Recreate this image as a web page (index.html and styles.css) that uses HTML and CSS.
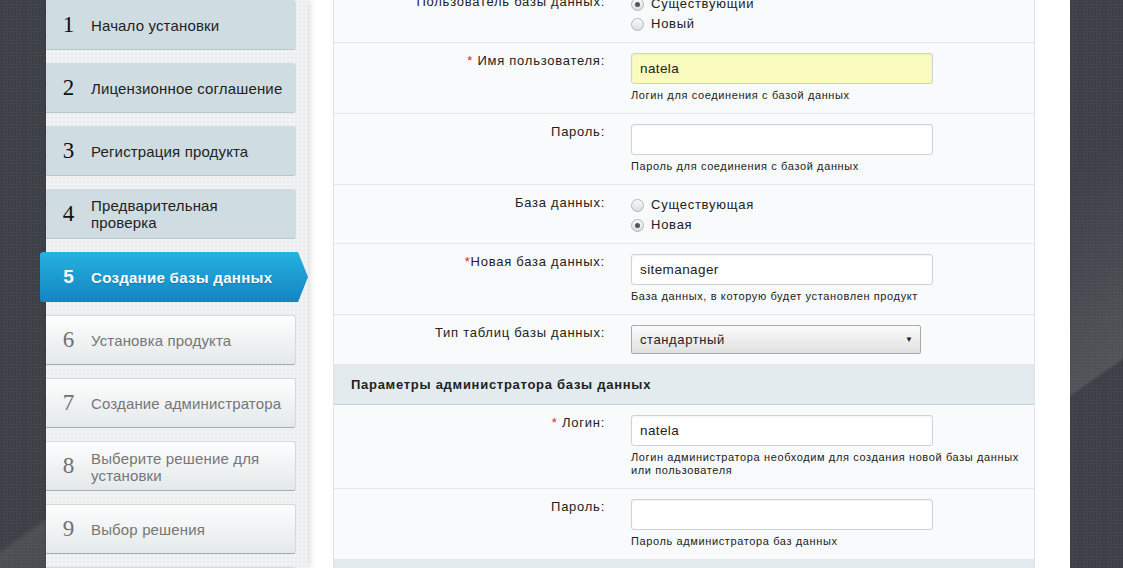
FILE: index.html
```html
<!DOCTYPE html>
<html lang="ru">
<head>
<meta charset="utf-8">
<title>Создание базы данных</title>
<link rel="stylesheet" href="styles.css">
</head>
<body>
<div class="page">
  <aside class="sidebar">
    <ol class="steps">
      <li class="step done"><span class="num">1</span><span class="label">Начало установки</span></li>
      <li class="step done"><span class="num">2</span><span class="label">Лицензионное соглашение</span></li>
      <li class="step done"><span class="num">3</span><span class="label">Регистрация продукта</span></li>
      <li class="step done"><span class="num">4</span><span class="label">Предварительная<br>проверка</span></li>
      <li class="step active"><span class="num">5</span><span class="label">Создание базы данных</span></li>
      <li class="step todo"><span class="num">6</span><span class="label">Установка продукта</span></li>
      <li class="step todo"><span class="num">7</span><span class="label">Создание администратора</span></li>
      <li class="step todo"><span class="num">8</span><span class="label">Выберите решение для<br>установки</span></li>
      <li class="step todo"><span class="num">9</span><span class="label">Выбор решения</span></li>
      <li class="step todo"></li>
    </ol>
  </aside>
  <main class="content">
    <div class="panel">
      <div class="row row-radio">
        <div class="lbl">Пользователь базы данных:</div>
        <div class="radios">
          <div class="opt"><span class="radio checked"></span>Существующий</div>
          <div class="opt"><span class="radio"></span>Новый</div>
        </div>
      </div>
      <div class="row">
        <div class="lbl"><span class="req">*</span> Имя пользователя:</div>
        <div class="ctl">
          <div class="field filled">natela</div>
          <div class="hint">Логин для соединения с базой данных</div>
        </div>
      </div>
      <div class="row">
        <div class="lbl">Пароль:</div>
        <div class="ctl">
          <div class="field"></div>
          <div class="hint">Пароль для соединения с базой данных</div>
        </div>
      </div>
      <div class="row row-radio">
        <div class="lbl">База данных:</div>
        <div class="radios">
          <div class="opt"><span class="radio"></span>Существующая</div>
          <div class="opt"><span class="radio checked"></span>Новая</div>
        </div>
      </div>
      <div class="row">
        <div class="lbl"><span class="req">*</span>Новая база данных:</div>
        <div class="ctl">
          <div class="field">sitemanager</div>
          <div class="hint">База данных, в которую будет установлен продукт</div>
        </div>
      </div>
      <div class="row row-select">
        <div class="lbl">Тип таблиц базы данных:</div>
        <div class="ctl">
          <div class="select"><span>стандартный</span><span class="caret">▼</span></div>
        </div>
      </div>
      <div class="section">Параметры администратора базы данных</div>
      <div class="row">
        <div class="lbl"><span class="req">*</span> Логин:</div>
        <div class="ctl">
          <div class="field">natela</div>
          <div class="hint">Логин администратора необходим для создания новой базы данных<br>или пользователя</div>
        </div>
      </div>
      <div class="row">
        <div class="lbl">Пароль:</div>
        <div class="ctl">
          <div class="field"></div>
          <div class="hint">Пароль администратора баз данных</div>
        </div>
      </div>
      <div class="section"></div>
    </div>
  </main>
</div>
</body>
</html>
```

FILE: styles.css
```css
html, body {
  margin: 0;
  height: 568px;
  overflow: hidden;
}

body {
  font-family: "Liberation Sans", Arial, sans-serif;
  color: #222;
  background-color: #3c3f45;
  background-image:
    radial-gradient(rgba(255, 255, 255, 0.06) 0.7px, transparent 1.1px),
    linear-gradient(145deg, transparent 0%, transparent 40.5%, rgba(255, 255, 255, 0.08) 41%, rgba(255, 255, 255, 0.04) 48%, transparent 52%, transparent 68%, rgba(255, 255, 255, 0.05) 77%, rgba(255, 255, 255, 0.1) 84.4%, transparent 84.7%);
  background-size: 3px 3px, 100% 100%;
}

.page {
  display: flex;
  width: 1024px;
  height: 568px;
  margin-left: 46px;
}

/* ---------- sidebar ---------- */
.sidebar {
  width: 262px;
  flex: none;
  background-color: #f1f2f3;
  background-image: radial-gradient(rgba(0, 0, 0, 0.035) 0.7px, transparent 1.1px);
  background-size: 4px 4px;
  box-shadow: 2px 0 6px rgba(0, 0, 0, 0.14);
  position: relative;
  z-index: 1;
}

.steps {
  list-style: none;
  margin: 0;
  padding: 0;
  display: flex;
  flex-direction: column;
  gap: 13px;
  width: 250px;
}

.step {
  box-sizing: border-box;
  height: 50px;
  display: flex;
  align-items: center;
  border-radius: 0 3px 3px 0;
  flex: none;
}

.num {
  width: 45px;
  flex: none;
  text-align: center;
  font-family: "Liberation Serif", "Times New Roman", serif;
  font-size: 23px;
  line-height: 24px;
}

.label {
  font-size: 15px;
  line-height: 17px;
  letter-spacing: 0.15px;
  white-space: nowrap;
  padding-top: 1px;
}

.done {
  background: #cfdde2;
  border-bottom: 1px solid #b9c8ce;
  color: #222;
}

.done .num {
  color: #111;
}

.todo {
  background: linear-gradient(#fdfdfd, #e3e9eb);
  border: 1px solid #d4dadc;
  border-left: 0;
  border-bottom-color: #a5acaf;
  color: #767676;
}

.todo .num {
  color: #707070;
}

.active {
  width: 268px;
  margin-left: -6px;
  padding-left: 6px;
  border-radius: 3px 0 0 3px;
  background: linear-gradient(#25b2df, #1484c4);
  clip-path: polygon(0 0, 258px 0, 268px 50%, 258px 100%, 0 100%);
  color: #fff;
}

.active .num {
  font-family: "Liberation Sans", Arial, sans-serif;
  font-weight: bold;
  font-size: 19px;
}

.active .label {
  font-weight: bold;
  letter-spacing: 0.3px;
  text-shadow: 0 1px 1px rgba(0, 0, 0, 0.2);
}

/* ---------- content ---------- */
.content {
  flex: 1;
  background: #fff;
  padding: 0 35px 0 25px;
}

.panel {
  margin-top: -16px;
  background: #f9fafc;
  border-left: 1px solid #e0e4e7;
  border-right: 1px solid #e0e4e7;
}

.row {
  display: grid;
  grid-template-columns: 297px 1fr;
  padding: 10px 0 11px;
  border-bottom: 1px solid #e3e7ea;
}

.row-radio {
  padding-bottom: 8px;
}

.row-select {
  padding-bottom: 10px;
}

.lbl {
  text-align: right;
  padding-right: 26px;
  font-size: 13px;
  line-height: 16px;
  letter-spacing: 0.75px;
  color: #222;
}

.req {
  color: #e3242b;
}

.radios {
  font-size: 13px;
  line-height: 20px;
  letter-spacing: 0.75px;
}

.opt {
  display: flex;
  align-items: center;
  gap: 7px;
}

.radio {
  box-sizing: border-box;
  width: 13px;
  height: 13px;
  border-radius: 50%;
  border: 1px solid #b3b6b9;
  background: linear-gradient(#fafafa, #dcdddf);
  display: flex;
  align-items: center;
  justify-content: center;
}

.radio.checked::after {
  content: "";
  width: 5px;
  height: 5px;
  border-radius: 50%;
  background: #555;
}

.field {
  box-sizing: border-box;
  width: 302px;
  height: 31px;
  border: 1px solid #cdd2d5;
  border-radius: 3px;
  background: #fff;
  box-shadow: inset 0 1px 2px rgba(0, 0, 0, 0.05);
  padding: 0 8px;
  font-size: 13.5px;
  line-height: 29px;
  letter-spacing: 0.4px;
  color: #222;
}

.field.filled {
  background: #f9fbbf;
}

.hint {
  margin-top: 5px;
  font-size: 11px;
  line-height: 13px;
  letter-spacing: 0.62px;
  white-space: nowrap;
  color: #222;
}

.select {
  box-sizing: border-box;
  width: 290px;
  height: 29px;
  border: 1px solid #a6aaad;
  border-radius: 2px;
  background: linear-gradient(#fbfbfb, #e0e0e0);
  padding: 0 7px 0 8px;
  display: flex;
  align-items: center;
  justify-content: space-between;
  font-size: 13px;
  letter-spacing: 0.6px;
  color: #222;
}

.caret {
  font-size: 8px;
  letter-spacing: 0;
  color: #222;
}

.section {
  height: 39px;
  line-height: 39px;
  padding-left: 17px;
  background: #e3ebee;
  border-bottom: 1px solid #c6cfd3;
  font-size: 13px;
  font-weight: bold;
  letter-spacing: 0.72px;
  color: #222;
}
```
